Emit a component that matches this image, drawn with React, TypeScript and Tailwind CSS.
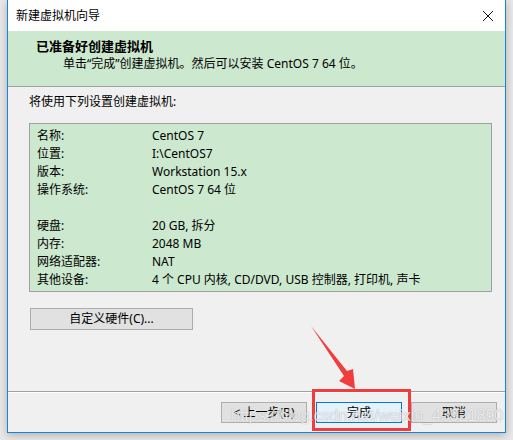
import React from 'react';

const font = { fontFamily: '"Noto Sans", "Noto Sans CJK SC", sans-serif' };

const rows: [string, string][] = [
  ['名称:', 'CentOS 7'],
  ['位置:', 'I:\\CentOS7'],
  ['版本:', 'Workstation 15.x'],
  ['操作系统:', 'CentOS 7 64 位'],
  ['', ''],
  ['硬盘:', '20 GB, 拆分'],
  ['内存:', '2048 MB'],
  ['网络适配器:', 'NAT'],
  ['其他设备:', '4 个 CPU 内核, CD/DVD, USB 控制器, 打印机, 声卡'],
];

function Btn({ children, primary = false }: { children: React.ReactNode; primary?: boolean }) {
  return (
    <div
      className={`w-[86px] h-[21px] flex items-center justify-center text-[12px] text-black border ${
        primary ? 'bg-[#e5f1fb] border-[#0078d7]' : 'bg-[#e1e1e1] border-[#adadad]'
      }`}
    >
      {children}
    </div>
  );
}

export default function App() {
  return (
    <div className="relative w-[513px] h-[440px] overflow-hidden bg-[#e8e8e8]" style={font}>
      {/* wizard window */}
      <div className="absolute left-[7px] top-0 w-[499px] h-[433px] flex flex-col bg-[#f0f0f0] border border-t-0 border-[#1883d7] shadow-[0_2px_8px_rgba(0,0,0,0.25)]">
        {/* title bar */}
        <div className="h-[31px] bg-white flex items-center justify-between pl-[8px] pr-[8px]">
          <span className="text-[12px] text-black">新建虚拟机向导</span>
          <svg width="12" height="12" viewBox="0 0 12 12" className="mr-[3px]">
            <path d="M1 1 L11 11 M11 1 L1 11" stroke="#111" strokeWidth="1" />
          </svg>
        </div>

        {/* green header */}
        <div className="h-[56px] bg-[#cce8cf] border-b border-[#a0a0a0] pt-[7px]">
          <div className="pl-[28px] text-[13px] font-bold leading-[17px] text-black">已准备好创建虚拟机</div>
          <div className="pl-[55px] text-[12px] leading-[17px] text-black">
            单击“完成”创建虚拟机。然后可以安装 CentOS 7 64 位。
          </div>
        </div>

        {/* body */}
        <div className="flex-1 flex flex-col pt-[7px] pl-[21px] pr-[13px] border-b border-[#a0a0a0]">
          <div className="text-[12px] leading-[16px] text-black">将使用下列设置创建虚拟机:</div>
          <div className="mt-[13px] bg-[#cce8cf] border border-[#a0a0a0] pt-[3px] pb-[2px] pl-[7px]">
            {rows.map(([k, v], i) => (
              <div key={i} className="flex h-[18px] items-center text-[12px] text-black">
                <span className="w-[115px] shrink-0">{k}</span>
                <span>{v}</span>
              </div>
            ))}
          </div>
          <div className="mt-[16px] ml-[1px] w-[163px] h-[22px] flex items-center justify-center bg-[#e1e1e1] border border-[#adadad] text-[12px] text-black">
            自定义硬件(C)...
          </div>
        </div>

        {/* footer */}
        <div className="flex-1 max-h-[40px] border-t border-white flex justify-end gap-[9px] pt-[9px] pr-[8px]">
          <Btn>&lt; 上一步(B)</Btn>
          <Btn primary>完成</Btn>
          <Btn>取消</Btn>
        </div>
      </div>

      {/* annotation: red arrow */}
      <svg className="absolute left-0 top-0 pointer-events-none" width="513" height="440">
        <polygon points="311,326 347,371 353,369 355,389 339,381 344,376" fill="#f23d3d" />
      </svg>

      {/* annotation: red box */}
      <div className="absolute left-[312px] top-[389px] w-[99px] h-[42px] border-[3px] border-[#f03c3c] pointer-events-none" />

      {/* watermark */}
      <div
        className="absolute left-[231px] top-[406px] text-[16px] leading-[20px] text-white/80 pointer-events-none whitespace-nowrap"
        style={{ fontFamily: '"Liberation Sans", Arial, sans-serif', textShadow: '0 0 1px rgba(90,90,90,0.6)' }}
      >
        https://blog.csdn.net/weixin_43921890
      </div>
    </div>
  );
}
